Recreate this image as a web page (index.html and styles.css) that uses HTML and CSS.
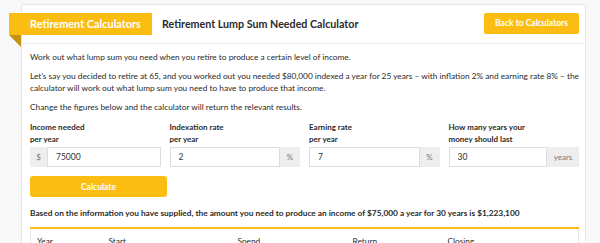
FILE: index.html
```html
<!DOCTYPE html>
<html lang="en">
  <head>
    <meta charset="UTF-8" />
    <meta name="viewport" content="width=device-width, initial-scale=1.0" />
    <title>Retirement Lump Sum Needed Calculator</title>
    <link rel="stylesheet" href="styles.css">
  </head>
  <body>
    <div class="card">
      <div class="card-head">
        <div class="tab">Retirement Calculators</div>
        <h1 class="title">Retirement Lump Sum Needed Calculator</h1>
        <a class="back" href="#">Back to Calculators</a>
      </div>
      <div class="card-body">
        <p>Work out what lump sum you need when you retire to produce a certain level of income.</p>
        <p>Let’s say you decided to retire at 65, and you worked out you needed $80,000 indexed a year for 25 years – with inflation 2% and earning rate 8% – the calculator will work out what lump sum you need to have to produce that income.</p>
        <p>Change the figures below and the calculator will return the relevant results.</p>

        <div class="fields">
          <div class="field">
            <label>Income needed<br />per year</label>
            <div class="group">
              <span class="addon">$</span>
              <input type="text" value="75000" />
            </div>
          </div>
          <div class="field">
            <label>Indexation rate<br />per year</label>
            <div class="group">
              <input type="text" value="2" />
              <span class="addon">%</span>
            </div>
          </div>
          <div class="field">
            <label>Earning rate<br />per year</label>
            <div class="group">
              <input type="text" value="7" />
              <span class="addon">%</span>
            </div>
          </div>
          <div class="field">
            <label>How many years your<br />money should last</label>
            <div class="group">
              <input type="text" value="30" />
              <span class="addon wide">years</span>
            </div>
          </div>
        </div>

        <button class="calc">Calculate</button>

        <p class="result">Based on the information you have supplied, the amount you need to produce an income of $75,000 a year for 30 years is $1,223,100</p>

        <table class="table">
          <thead>
            <tr>
              <th class="c-year">Year</th>
              <th class="c-start">Start</th>
              <th class="c-spend">Spend</th>
              <th class="c-return">Return</th>
              <th>Closing</th>
            </tr>
          </thead>
        </table>
      </div>
    </div>
  </body>
</html>
```

FILE: styles.css
```css
* {
  margin: 0;
  padding: 0;
  box-sizing: border-box;
}
body {
  background-color: #f8f8f8;
  font-family: Lato, "Open Sans", sans-serif;
  color: #2a2a2a;
  padding: 4px 14px 0 21px;
}
.card {
  background-color: #fff;
  border: 1px solid #e6e6e6;
  border-radius: 3px;
}
.card-head {
  display: flex;
  height: 39px;
  padding: 8px 6px 0 0;
  border-bottom: 1px solid #ececec;
}
.tab {
  position: relative;
  margin-left: -13px;
  width: 143px;
  height: 22px;
  line-height: 22px;
  padding-left: 21px;
  background-color: #fbbd12;
  color: #fff;
  font-weight: bold;
  font-size: 10.9px;
}
.tab::after {
  content: "";
  position: absolute;
  left: 0;
  top: 22px;
  border-top: 12px solid #c49210;
  border-left: 12px solid transparent;
}
.title {
  flex: 1;
  line-height: 22px;
  margin-left: 10px;
  font-size: 10.7px;
  font-weight: bold;
}
.back {
  display: block;
  width: 95px;
  height: 21px;
  line-height: 21px;
  text-align: center;
  background-color: #fbbd12;
  color: #fff;
  font-size: 8.5px;
  font-weight: bold;
  text-decoration: none;
  border-radius: 2px;
}
.card-body {
  padding: 7px 6px 0 8px;
}
.card-body p {
  font-size: 8.3px;
  line-height: 12px;
  margin-bottom: 7px;
}
.fields {
  display: grid;
  grid-template-columns: repeat(4, minmax(0, 1fr));
  column-gap: 9px;
  margin-top: 8px;
}
.field {
  min-width: 0;
}
.field label {
  display: block;
  font-size: 8px;
  font-weight: bold;
  line-height: 12px;
  margin-bottom: 2px;
}
.group {
  display: flex;
  height: 20px;
}
.group input {
  flex: 1;
  width: 0;
  min-width: 0;
  border: 1px solid #ddd;
  font-family: Lato, sans-serif;
  font-size: 8.5px;
  color: #333;
  padding-left: 8px;
}
.addon {
  flex: none;
  width: 20px;
  background-color: #eee;
  color: #777;
  font-size: 8px;
  line-height: 20px;
  text-align: center;
}
.group .addon:first-child {
  width: 17px;
}
.addon.wide {
  width: 32px;
}
.calc {
  display: block;
  width: 137px;
  height: 21px;
  margin: 9px 0 10px;
  border: none;
  border-radius: 3px;
  background-color: #fbbd12;
  color: #fff;
  font-family: Lato, sans-serif;
  font-weight: bold;
  font-size: 8.5px;
}
.card-body p.result {
  font-weight: bold;
  font-size: 8.3px;
  margin-bottom: 8px;
}
.table {
  width: 100%;
  table-layout: fixed;
  border-collapse: collapse;
  border: 1px solid #e6e6e6;
  border-top: 2px solid #fbbd12;
}
.table th {
  text-align: left;
  font-weight: normal;
  font-size: 8.3px;
  padding: 7px 0 8px 0;
}
.table .c-year {
  padding-left: 6px;
  width: 78px;
}
.table .c-start {
  width: 129px;
}
.table .c-spend {
  width: 115px;
}
.table .c-return {
  width: 95px;
}
```
